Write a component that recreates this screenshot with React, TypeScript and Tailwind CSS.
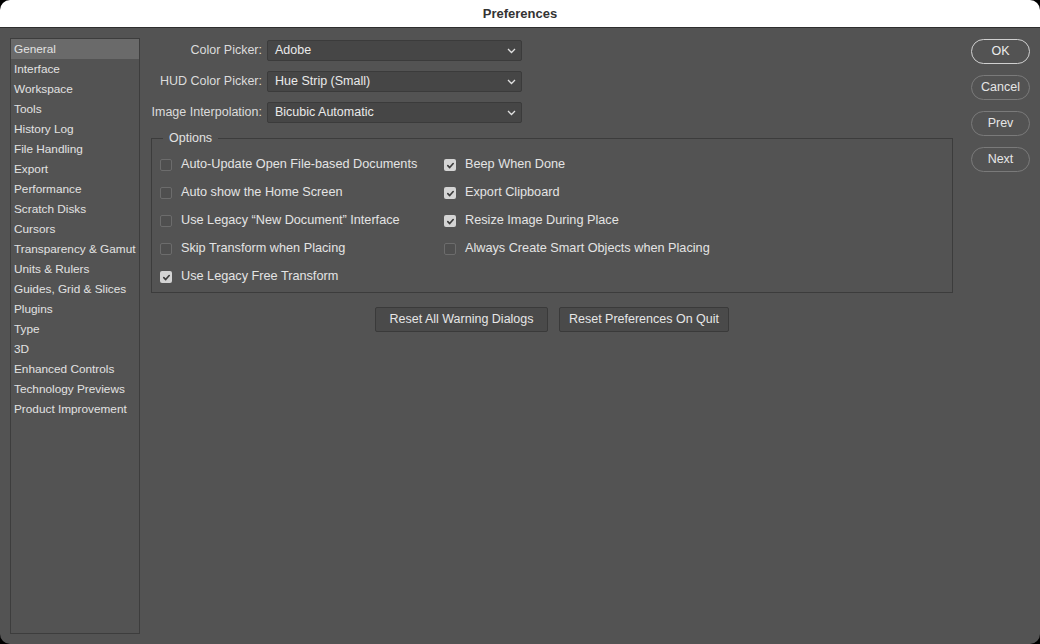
import React from 'react';

const sidebarItems = [
  'General',
  'Interface',
  'Workspace',
  'Tools',
  'History Log',
  'File Handling',
  'Export',
  'Performance',
  'Scratch Disks',
  'Cursors',
  'Transparency & Gamut',
  'Units & Rulers',
  'Guides, Grid & Slices',
  'Plugins',
  'Type',
  '3D',
  'Enhanced Controls',
  'Technology Previews',
  'Product Improvement',
];

const pickers = [
  { label: 'Color Picker:', value: 'Adobe' },
  { label: 'HUD Color Picker:', value: 'Hue Strip (Small)' },
  { label: 'Image Interpolation:', value: 'Bicubic Automatic' },
];

const leftOptions = [
  { label: 'Auto-Update Open File-based Documents', checked: false },
  { label: 'Auto show the Home Screen', checked: false },
  { label: 'Use Legacy \u201CNew Document\u201D Interface', checked: false },
  { label: 'Skip Transform when Placing', checked: false },
  { label: 'Use Legacy Free Transform', checked: true },
];

const rightOptions = [
  { label: 'Beep When Done', checked: true },
  { label: 'Export Clipboard', checked: true },
  { label: 'Resize Image During Place', checked: true },
  { label: 'Always Create Smart Objects when Placing', checked: false },
];

const font = { fontFamily: '"Liberation Sans", Arial, sans-serif' };

function Checkbox({ checked }: { checked: boolean }) {
  if (checked) {
    return (
      <span className="w-[12px] h-[12px] rounded-[2px] bg-[#d4d4d4] flex items-center justify-center shrink-0">
        <svg width="9" height="9" viewBox="0 0 10 10">
          <path d="M2 5.2 L4.1 7.3 L8 2.8" fill="none" stroke="#3a3a3a" strokeWidth="1.8" strokeLinecap="round" strokeLinejoin="round" />
        </svg>
      </span>
    );
  }
  return <span className="w-[12px] h-[12px] rounded-[2px] border border-[#6c6c6c] bg-[#4f4f4f] shrink-0" />;
}

function OptionRow({ label, checked }: { label: string; checked: boolean }) {
  return (
    <div className="h-[28px] flex items-center gap-[9px]">
      <Checkbox checked={checked} />
      <span className="text-[12.7px] text-[#e4e4e4] whitespace-nowrap">{label}</span>
    </div>
  );
}

export default function App() {
  return (
    <div className="w-[1040px] h-[644px] bg-black" style={font}>
      <div className="w-full h-full rounded-[10px] overflow-hidden flex flex-col">
        {/* title bar */}
        <div className="h-[28px] bg-white border-b border-[#2e2e2e] flex items-center justify-center shrink-0">
          <span className="text-[13px] font-bold text-[#333333]">Preferences</span>
        </div>

        <div className="flex-1 bg-[#535353] flex pt-[10px] pl-[10px] pb-[10px]">
          {/* sidebar */}
          <div className="w-[130px] border border-[#3d3d3d] flex flex-col">
            {sidebarItems.map((item, i) => (
              <div
                key={item}
                className={`h-[20px] leading-[20px] pl-[3px] text-[11.8px] text-[#e2e2e2] whitespace-nowrap ${i === 0 ? 'bg-[#6a6a6a]' : ''}`}
              >
                {item}
              </div>
            ))}
          </div>

          {/* main */}
          <div className="ml-[11px] w-[802px] flex flex-col">
            <div className="pt-[2px] flex flex-col gap-[10px]">
              {pickers.map((p) => (
                <div key={p.label} className="h-[21px] flex items-center gap-[5px]">
                  <span className="w-[111px] text-right text-[12.5px] text-[#dcdcdc] whitespace-nowrap">{p.label}</span>
                  <div className="w-[255px] h-[21px] bg-[#464646] border border-[#3b3b3b] rounded-[2px] flex items-center justify-between pl-[7px] pr-[5px]">
                    <span className="text-[12.5px] text-[#eaeaea]">{p.value}</span>
                    <svg width="9" height="6" viewBox="0 0 9 6">
                      <path d="M1 1 L4.5 4.5 L8 1" fill="none" stroke="#e0e0e0" strokeWidth="1.3" />
                    </svg>
                  </div>
                </div>
              ))}
            </div>

            <fieldset className="mt-[7px] border border-[#3c3c3c] pl-[8px] pt-[5px] pb-[1px]">
              <legend className="ml-[3px] px-[6px] leading-[16px] text-[12.5px] text-[#e2e2e2]">Options</legend>
              <div className="grid grid-cols-[284px_1fr]">
                <div className="flex flex-col">
                  {leftOptions.map((o) => (
                    <OptionRow key={o.label} {...o} />
                  ))}
                </div>
                <div className="flex flex-col">
                  {rightOptions.map((o) => (
                    <OptionRow key={o.label} {...o} />
                  ))}
                </div>
              </div>
            </fieldset>

            <div className="mt-[14px] flex justify-center gap-[11px]">
              <button className="w-[173px] h-[25px] bg-[#4a4a4a] border border-[#3a3a3a] rounded-[2px] text-[12.5px] text-[#e6e6e6]">
                Reset All Warning Dialogs
              </button>
              <button className="w-[170px] h-[25px] bg-[#4a4a4a] border border-[#3a3a3a] rounded-[2px] text-[12.5px] text-[#e6e6e6]">
                Reset Preferences On Quit
              </button>
            </div>
          </div>

          {/* right buttons */}
          <div className="ml-[18px] w-[59px] pt-[1px] flex flex-col gap-[11px]">
            <button className="h-[25px] rounded-full border-[1.5px] border-[#d0d0d0] text-[12.5px] text-[#ececec]">OK</button>
            <button className="h-[25px] rounded-full border border-[#7a7a7a] text-[12.5px] text-[#e6e6e6]">Cancel</button>
            <button className="h-[25px] rounded-full border border-[#7a7a7a] text-[12.5px] text-[#e6e6e6]">Prev</button>
            <button className="h-[25px] rounded-full border border-[#7a7a7a] text-[12.5px] text-[#e6e6e6]">Next</button>
          </div>
        </div>
      </div>
    </div>
  );
}
